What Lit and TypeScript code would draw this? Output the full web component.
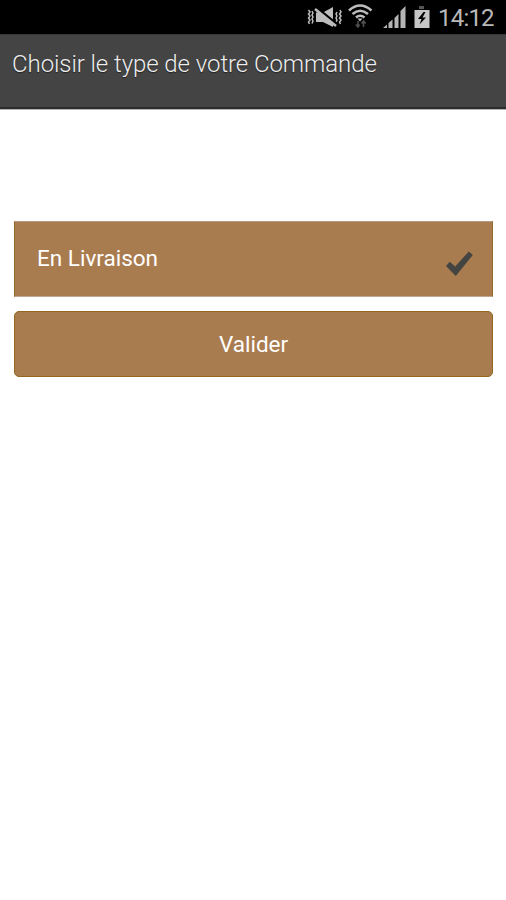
import { LitElement, html, css } from "lit";
import { customElement, property, state } from "lit/decorators.js";

@customElement("status-bar")
class StatusBar extends LitElement {
  @property() time = "";

  static styles = css`
    :host {
      display: flex;
      justify-content: flex-end;
      height: 34px;
      background: #000;
      color: #b9b9b9;
    }
    svg { display: block; width: 132px; height: 34px; flex: none; }
    .time {
      width: 74px;
      padding-left: 6px;
      box-sizing: border-box;
      font: 400 24px/37px Roboto, sans-serif;
      letter-spacing: -0.8px;
      white-space: nowrap;
    }
  `;

  render() {
    return html`
      <svg viewBox="300 0 132 34" fill="none" stroke="#bdbdbd">
        <g stroke-width="1.5">
          <path d="M308.500 10l1.500 2-1.500 2 1.500 2-1.500 2 1.500 2-1.500 2 1 2M312 11l1 2-1 2 1 2-1 2 1 2-1 2.500" />
          <path d="M340 10l1 2-1.500 2 1.500 2-1.500 2 1.500 2-1.500 2 1 2M337 12l-1 2 1 2-1 2 1 2-1 2" />
        </g>
        <path d="M316 12.500h7l10-5.500v20l-10-5h-7z" fill="#bdbdbd" stroke="none" />
        <path d="M317 8L338 25" stroke="#000" stroke-width="2.500" />
        <path d="M315 9L336 26" stroke-width="2.500" />
        <g stroke-width="2.500">
          <path d="M349 10.500q11-10 22.500 0M352.500 14q7.500-6.500 15.500 0M356 17.500q4-3.500 8.500 0" />
        </g>
        <path d="M357.500 18.500h5l-2.500 3z" fill="#bdbdbd" stroke="none" />
        <path d="M358 21v6M355.800 24.500l2.200 2.500 1.500-2.500M363.500 27v-6M361.500 23.500l2-2.500 2.200 2.500" stroke="#505050" stroke-width="1.600" />
        <path d="M383 28l4-3.500V28zM388.500 28v-5l4-3.500V28zM394.500 28V18l4-4v14zM400.500 28V11l5-5v22z" fill="#b5b5b5" stroke="none" />
        <path d="M419 6h5v3h-5z" fill="#555" stroke="none" />
        <path d="M414.500 10h15v18h-15z" fill="#c6c6c6" stroke="none" />
        <path d="M423.500 12l-5.500 7h3.500l-2 5.500 6.500-7h-3.500l3-5.500z" fill="#000" stroke="none" />
      </svg>
      <span class="time">${this.time}</span>
    `;
  }
}

@customElement("app-root")
class AppRoot extends LitElement {
  @state() private selected = true;

  static styles = css`
    :host {
      display: block;
      min-height: 900px;
      background: #fff;
      font-family: Roboto, sans-serif;
    }
    header {
      box-sizing: border-box;
      height: 75px;
      padding: 14px 12px 0;
      background: #444;
      border-top: 1px solid #383838;
      border-bottom: 2px solid #2b2b2b;
      box-shadow: 0 1px 0 #b5b3b3;
      color: #eee;
    }
    h1 {
      margin: 0;
      font-size: 24px;
      font-weight: 300;
      line-height: 30px;
      letter-spacing: -0.07px;
      white-space: nowrap;
      text-shadow: 0 1px 1px #222;
    }
    main {
      display: flex;
      flex-direction: column;
      gap: 14px;
      padding: 112px 13px 0 14px;
    }
    .option, .submit {
      box-sizing: border-box;
      margin: 0;
      background: #a97c50;
      color: #fff;
      font: 400 22.5px/28px Roboto, sans-serif;
    }
    .option {
      display: flex;
      justify-content: space-between;
      align-items: flex-start;
      height: 76px;
      padding: 22px 18px 0 22px;
      border: 1px solid #b08b68;
      border-left-color: #94692c;
      border-right-color: #94692c;
      border-top-color: #b59a83;
      border-bottom-color: #bea997;
    }
    .option svg { width: 30px; height: 30px; margin-top: 5px; }
    .submit {
      height: 66px;
      padding: 0 0 1px;
      border: 1px solid #946620;
      border-radius: 5px;
      text-align: center;
    }
  `;

  render() {
    return html`
      <status-bar time="14:12"></status-bar>
      <header><h1>Choisir le type de votre Commande</h1></header>
      <main>
        <div class="option" @click=${() => (this.selected = !this.selected)}>
          <span>En Livraison</span>
          ${this.selected
            ? html`<svg viewBox="0 0 30 30"><path d="M2 17l3.700-4.300 5.500 4.800L24.800 2.500l4 3.500L11.800 27z" fill="#444542" /></svg>`
            : ""}
        </div>
        <button class="submit">Valider</button>
      </main>
    `;
  }
}
